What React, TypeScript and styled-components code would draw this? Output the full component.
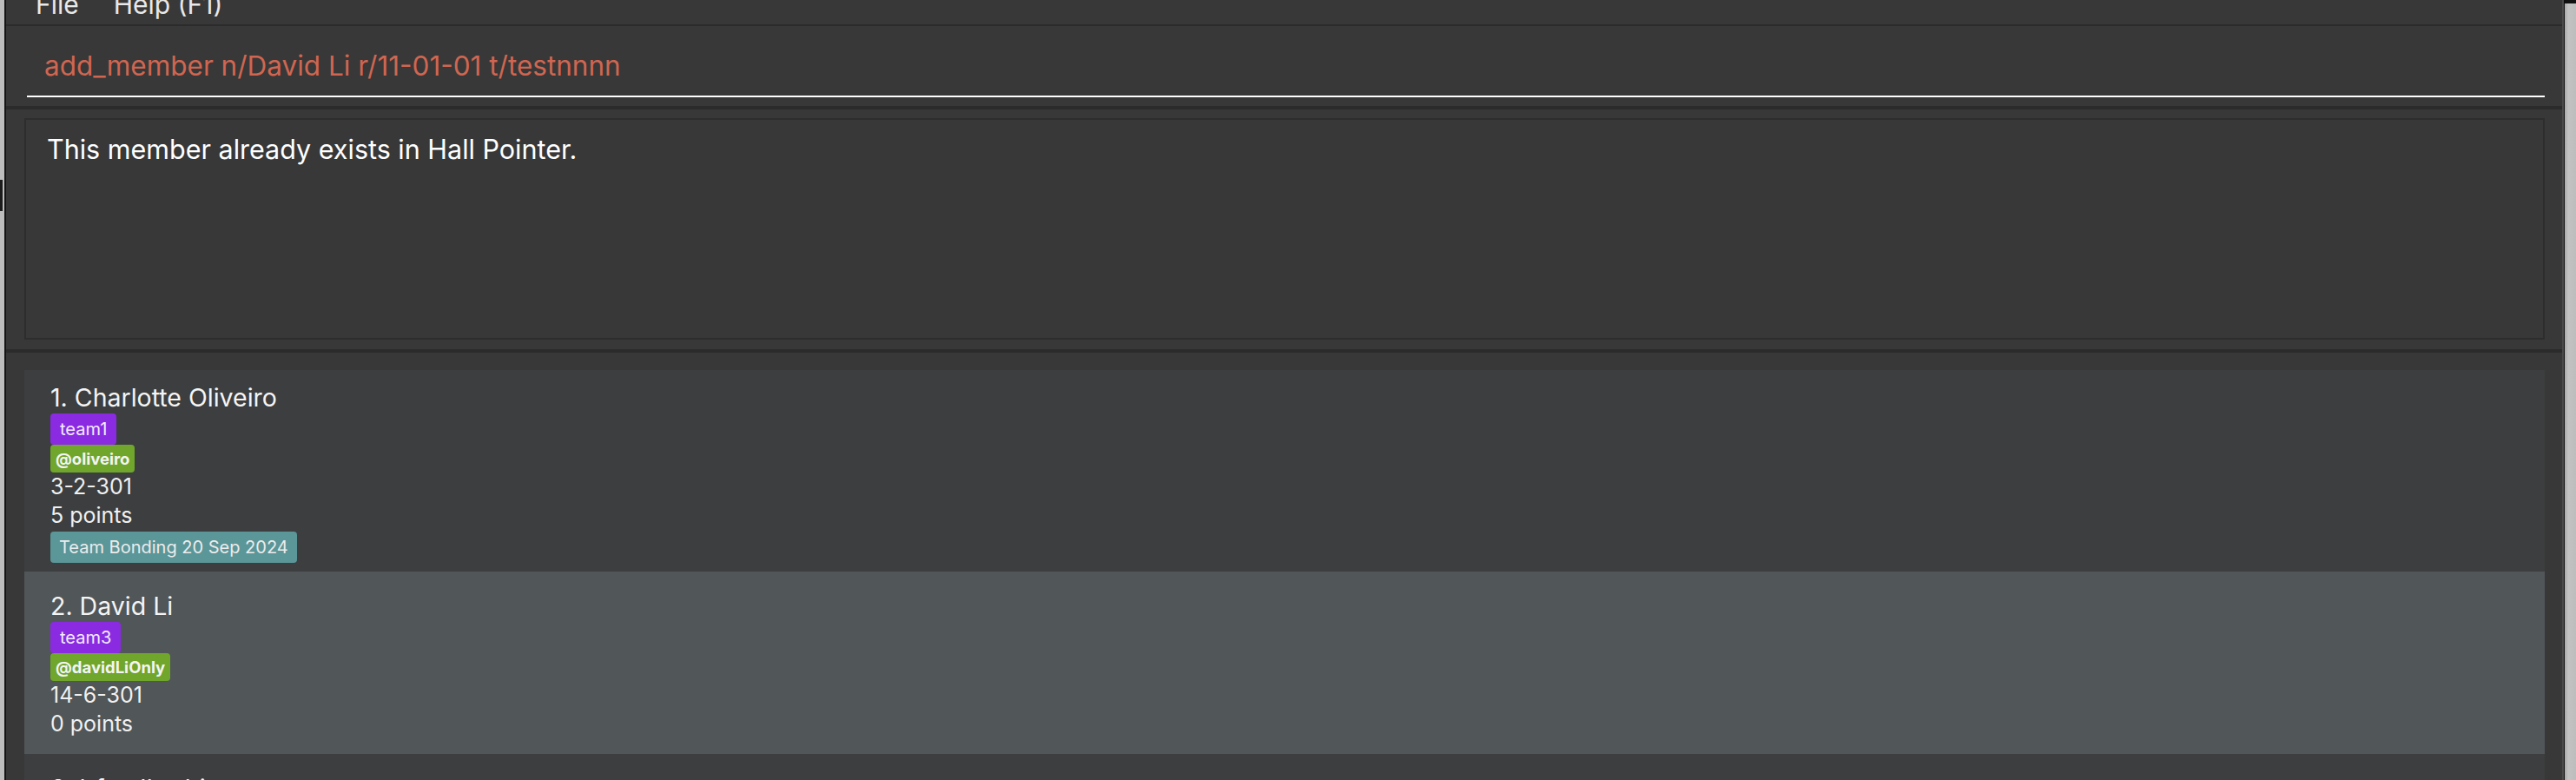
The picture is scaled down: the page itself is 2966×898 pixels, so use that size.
import styled, { createGlobalStyle, css } from 'styled-components';

type TagKind = 'team' | 'handle' | 'event';

type Member = {
  name: string;
  team?: string;
  handle?: string;
  room?: string;
  points?: number;
  events?: string[];
};

const members: Member[] = [
  {
    name: 'Charlotte Oliveiro',
    team: 'team1',
    handle: '@oliveiro',
    room: '3-2-301',
    points: 5,
    events: ['Team Bonding 20 Sep 2024'],
  },
  {
    name: 'David Li',
    team: 'team3',
    handle: '@davidLiOnly',
    room: '14-6-301',
    points: 0,
  },
  {
    name: 'Irfan Ibrahim',
    team: 'team2',
    handle: '@irfanib',
    room: '9-1-101',
    points: 2,
  },
];

const App = () => {
  return (
    <>
      <GlobalStyle />
      <Page>
        <LeftGutter>
          <GutterMark />
        </LeftGutter>
        <Window>
          <Frame>
            <MenuBar>
              <MenuItem>File</MenuItem>
              <MenuItem>Help (F1)</MenuItem>
            </MenuBar>
            <Divider $size={2} />
            <CommandBox>
              <CommandField>
                <CommandText>add_member n/David Li r/11-01-01 t/testnnnn</CommandText>
              </CommandField>
            </CommandBox>
            <Divider $size={4} />
            <ResultPane>
              <ResultBox>This member already exists in Hall Pointer.</ResultBox>
            </ResultPane>
            <Divider $size={4} />
            <MemberList>
              {members.map((member, index) => (
                <MemberCard key={member.name} index={index} member={member} />
              ))}
            </MemberList>
          </Frame>
        </Window>
        <RightGutter />
      </Page>
    </>
  );
};

const MemberCard = ({ index, member }: { index: number; member: Member }) => {
  return (
    <Card $odd={index % 2 === 1}>
      <CardName>{`${index + 1}. ${member.name}`}</CardName>
      {member.team && <Tag $kind="team">{member.team}</Tag>}
      {member.handle && <Tag $kind="handle">{member.handle}</Tag>}
      {member.room && <CardLine>{member.room}</CardLine>}
      {member.points !== undefined && <CardLine>{`${member.points} points`}</CardLine>}
      {member.events?.map(event => (
        <Tag key={event} $kind="event" $spaced>
          {event}
        </Tag>
      ))}
    </Card>
  );
};

export default App;

const GlobalStyle = createGlobalStyle`
  html, body {
    margin: 0;
    padding: 0;
    height: 898px;
    overflow: hidden;
    background: #bcbcbc;
  }
  body {
    font-family: Inter, "Noto Sans", "DejaVu Sans", sans-serif;
  }
  * {
    box-sizing: border-box;
  }
`;

const Page = styled.div`
  display: flex;
  width: 2966px;
  height: 898px;
  overflow: hidden;
`;

const LeftGutter = styled.div`
  width: 5px;
  flex-shrink: 0;
  background: #bdbdbd;
  padding-top: 207px;
`;

const GutterMark = styled.div`
  width: 3px;
  height: 36px;
  background: #1c1c1c;
`;

const RightGutter = styled.div`
  width: 13px;
  flex-shrink: 0;
  background: linear-gradient(to right, #a9a9a9 0, #c2c2c2 4px, #bdbdbd 100%);
  border-top: 4px solid #111111;
`;

const Window = styled.div`
  flex: 1;
  min-width: 0;
  border-left: 2px solid #151515;
  border-right: 1px solid #0e0e0e;
`;

const Frame = styled.div`
  height: 100%;
  background: #383838;
  border-right: 2px solid #4b4b4b;
  display: flex;
  flex-direction: column;

  & > * {
    flex-shrink: 0;
  }
`;

const MenuBar = styled.div`
  height: 28px;
  overflow: hidden;
  display: flex;
  gap: 40px;
  padding-left: 34px;
`;

const MenuItem = styled.span`
  margin-top: -13px;
  font-size: 30px;
  line-height: 36px;
  color: #e8e8e8;
`;

const Divider = styled.div<{ $size: number }>`
  height: ${({ $size }) => $size}px;
  background: #2b2b2b;
`;

const CommandBox = styled.div`
  padding: 28px 20px 10px 24px;
`;

const CommandField = styled.div`
  border-bottom: 2px solid #ffffff;
  padding: 0 0 16px 20px;
`;

const CommandText = styled.div`
  font-size: 31.5px;
  line-height: 36px;
  color: #d06651;
  white-space: nowrap;
`;

const ResultPane = styled.div`
  padding: 10px 20px 11px 21px;
`;

const ResultBox = styled.div`
  height: 255px;
  border: 2px solid #2d2d2d;
  padding: 16px 24px;
  font-size: 30.5px;
  line-height: 36px;
  color: #ffffff;
`;

const MemberList = styled.div`
  padding: 20px 20px 0 21px;
  display: flex;
  flex-direction: column;
`;

const Card = styled.div<{ $odd: boolean }>`
  min-height: 210px;
  padding: 14px 30px 10px;
  display: flex;
  flex-direction: column;
  justify-content: center;
  align-items: flex-start;
  flex-shrink: 0;
  background: ${({ $odd }) => ($odd ? '#515658' : '#3c3e3f')};
`;

const CardName = styled.div`
  font-size: 28.5px;
  line-height: 36px;
  color: #f4f4f4;
`;

const CardLine = styled.div`
  font-size: 25px;
  line-height: 33px;
  color: #f0f0f0;
`;

const tagStyles = {
  team: css`
    background: #8a2be2;
    color: #f3ecff;
    font-size: 20px;
    line-height: 22px;
    padding: 7px 11px;
  `,
  handle: css`
    background: #6fa62b;
    color: #f4f4f4;
    font-size: 18.5px;
    font-weight: 700;
    line-height: 22px;
    padding: 5px 6px;
  `,
  event: css`
    background: #5b9698;
    color: #ececec;
    font-size: 20px;
    line-height: 22px;
    padding: 7px 10px;
  `,
};

const Tag = styled.span<{ $kind: TagKind; $spaced?: boolean }>`
  display: inline-block;
  border-radius: 4px;
  white-space: nowrap;
  margin-top: ${({ $spaced }) => ($spaced ? '2px' : '0')};
  ${({ $kind }) => tagStyles[$kind]}
`;
